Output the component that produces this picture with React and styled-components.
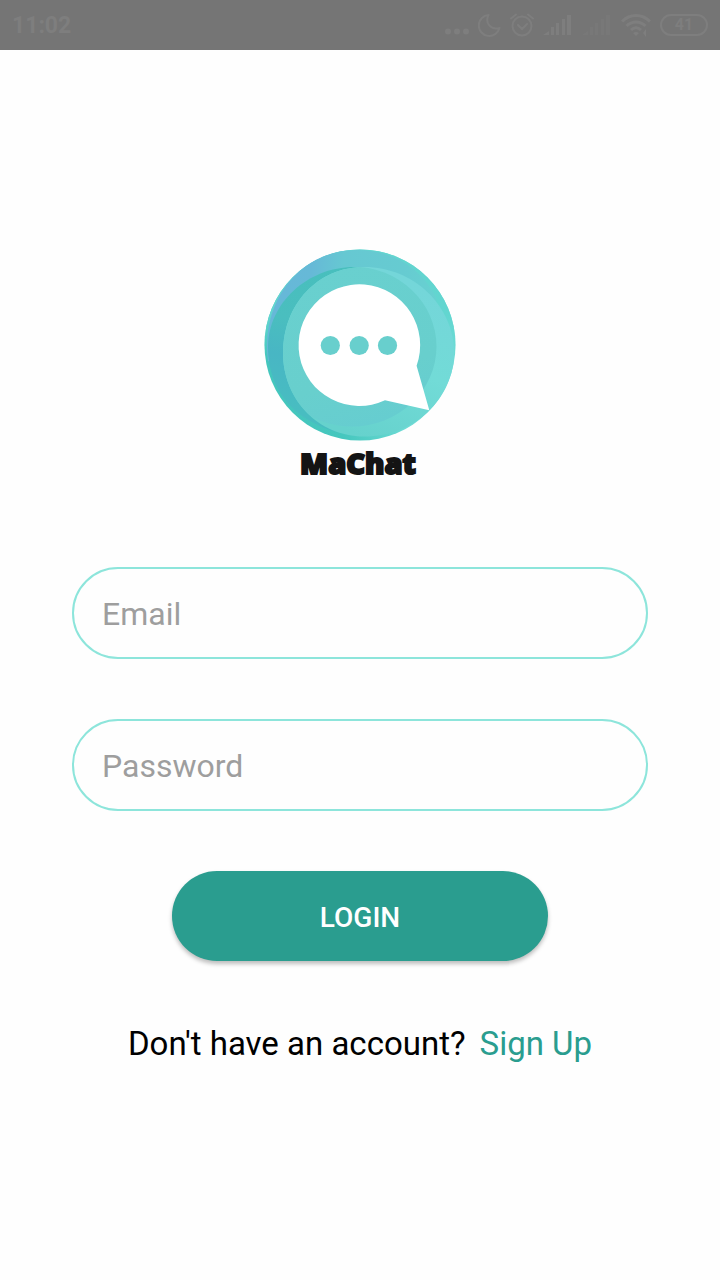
import React from "react";
import styled, { createGlobalStyle } from "styled-components";

const teal = "#2a9d8f";

const GlobalStyle = createGlobalStyle`
  *, *::before, *::after { box-sizing: border-box; }
  html, body { margin: 0; padding: 0; background: #fefefe; }
  body { font-family: Roboto, "Liberation Sans", sans-serif; }
`;

const Screen = styled.div`
  display: flex;
  flex-direction: column;
  min-height: 100vh;
`;

const StatusBar = styled.header`
  display: flex;
  align-items: center;
  justify-content: space-between;
  height: 50px;
  padding: 0 12px;
  background: #757575;
  color: #7e7e7e;
`;

const Clock = styled.time`
  padding-top: 2px;
  font-size: 23px;
  font-weight: 700;
  line-height: 28px;
`;

const StatusIcons = styled.div`
  display: flex;
  align-items: center;
  gap: 9px;
`;

const StatusIcon = styled.svg`
  display: block;
  width: ${(p) => p.$width}px;
  height: 28px;
  opacity: ${(p) => (p.$faint ? 0.4 : 1)};
`;

const Battery = styled.span`
  display: flex;
  align-items: center;
  justify-content: center;
  width: 48px;
  height: 22px;
  border: 2px solid currentColor;
  border-radius: 11px;
  font-size: 16px;
  font-weight: 700;
  line-height: 18px;
`;

const Main = styled.main`
  display: flex;
  flex: 1;
  flex-direction: column;
  align-items: center;
  padding: 199px 10% 40px;
`;

const Brand = styled.div`
  display: flex;
  flex-direction: column;
  align-items: center;
`;

const Logo = styled.svg`
  display: block;
  width: 192px;
  height: 192px;
`;

const BrandName = styled.h1`
  margin: 4px 4px 0 0;
  color: #141414;
  font-family: "Noto Sans", "Open Sans", sans-serif;
  font-size: 29px;
  font-weight: 900;
  line-height: 36px;
  -webkit-text-stroke: 2px #141414;
`;

const Form = styled.form`
  display: flex;
  flex-direction: column;
  align-items: center;
  gap: 60px;
  width: 100%;
  margin-top: 86px;
`;

const Field = styled.input`
  width: 100%;
  height: 92px;
  padding: 2px 28px 0;
  border: 2px solid #8de5db;
  border-radius: 46px;
  background: transparent;
  color: #000;
  font-family: inherit;
  font-size: 32px;
  outline: none;

  &::placeholder {
    color: #9e9e9e;
    opacity: 1;
  }

  &:focus { border-color: ${teal}; }
`;

const LoginButton = styled.button`
  width: 376px;
  max-width: 100%;
  height: 90px;
  padding: 2px 0 0;
  border: 0;
  border-radius: 45px;
  background: ${teal};
  box-shadow: 0 3px 4px rgba(0, 0, 0, 0.26);
  color: #fff;
  font-family: inherit;
  font-size: 28px;
  font-weight: 500;
  cursor: pointer;
`;

const SignUpPrompt = styled.p`
  display: flex;
  flex-wrap: wrap;
  justify-content: center;
  column-gap: 14px;
  margin: 63px 0 0;
  color: #000;
  font-size: 33px;
  line-height: 40px;
`;

const SignUpLink = styled.a`
  color: ${teal};
  text-decoration: none;
`;

function SignalIcon({ faint }) {
  return (
    <StatusIcon $width={30} $faint={faint} viewBox="0 0 30 28" fill="currentColor" aria-hidden="true">
      <path d="M0 24l6-4v4z" />
      <rect x="8" y="16" width="3" height="8" />
      <rect x="13" y="12" width="3" height="12" />
      <rect x="19" y="8" width="3" height="16" />
      <rect x="24" y="4" width="4" height="20" />
    </StatusIcon>
  );
}

function MaChatLogo() {
  return (
    <Logo viewBox="0 0 192 192" role="img" aria-label="MaChat logo">
      <defs>
        <linearGradient id="rim" gradientUnits="userSpaceOnUse" x1="20" y1="150" x2="150" y2="100">
          <stop offset="0" stopColor="#44c6bd" />
          <stop offset="0.3" stopColor="#46c7be" />
          <stop offset="0.75" stopColor="#6edbd5" />
          <stop offset="1" stopColor="#6fdcd6" />
        </linearGradient>
        <linearGradient id="rimTop" gradientUnits="userSpaceOnUse" x1="0" y1="0" x2="0" y2="110">
          <stop offset="0" stopColor="#62d4cf" />
          <stop offset="0.6" stopColor="#62d6d0" />
          <stop offset="1" stopColor="#62d6d0" stopOpacity="0" />
        </linearGradient>
        <linearGradient id="sky" gradientUnits="userSpaceOnUse" x1="20" y1="60" x2="176" y2="70">
          <stop offset="0" stopColor="#66b8d8" />
          <stop offset="0.16" stopColor="#66b9d7" />
          <stop offset="0.36" stopColor="#66c8d2" />
          <stop offset="0.75" stopColor="#66cbd1" />
          <stop offset="1" stopColor="#68d2d1" />
        </linearGradient>
        <linearGradient id="deep" gradientUnits="userSpaceOnUse" x1="60" y1="18" x2="30" y2="160">
          <stop offset="0" stopColor="#48bfbd" />
          <stop offset="0.4" stopColor="#4abebf" />
          <stop offset="0.65" stopColor="#48b6c4" />
          <stop offset="1" stopColor="#48bdc1" />
        </linearGradient>
        <linearGradient id="glow" gradientUnits="userSpaceOnUse" x1="160" y1="40" x2="100" y2="188">
          <stop offset="0" stopColor="#74d6d9" />
          <stop offset="0.5" stopColor="#72dbd7" />
          <stop offset="1" stopColor="#66d2cd" />
        </linearGradient>
        <linearGradient id="core" gradientUnits="userSpaceOnUse" x1="50" y1="20" x2="100" y2="178">
          <stop offset="0" stopColor="#69d0cf" />
          <stop offset="0.7" stopColor="#68cfcd" />
          <stop offset="1" stopColor="#66cdd0" />
        </linearGradient>
        <clipPath id="coreClip">
          <ellipse cx="88" cy="97.5" rx="84.5" ry="80" />
        </clipPath>
      </defs>
      <circle cx="96" cy="96" r="95.5" fill="url(#rim)" />
      <circle cx="96" cy="96" r="95.5" fill="url(#rimTop)" />
      <path
        d="M4 112 C-4 50 38 1 92 1 C126 1 155 16 172 48 L176 100 L96 150z"
        fill="url(#sky)"
      />
      <path
        d="M4 98 C4 54 44 18 90 18 L100 18 L96 187 C42 182 4 150 4 98z"
        fill="url(#deep)"
      />
      <path
        d="M19 104 C19 55 54 18 100 18 C150 18 190 57 190 104 C190 148 152 187.500 100 187.500 C54 187.500 19 150 19 104z"
        fill="url(#glow)"
      />
      <path
        d="M19 104 C19 55 54 18 100 18 C150 18 190 57 190 104 C190 148 152 187.500 100 187.500 C54 187.500 19 150 19 104z"
        fill="url(#core)"
        clipPath="url(#coreClip)"
      />
      <path
        d="M152.600 116.700 L165.300 161.200 L121 151.300 A60.800 60.800 0 1 1 152.600 116.700z"
        fill="#fff"
      />
      <g fill="#68cfcd">
        <circle cx="66.300" cy="96.500" r="9.600" />
        <circle cx="95.200" cy="96.500" r="9.600" />
        <circle cx="123.500" cy="96.500" r="9.600" />
      </g>
    </Logo>
  );
}

export default function App() {
  return (
    <Screen>
      <GlobalStyle />
      <StatusBar>
        <Clock>11:02</Clock>
        <StatusIcons>
          <StatusIcon $width={24} viewBox="0 0 24 28" fill="currentColor" aria-hidden="true">
            <circle cx="3" cy="20.500" r="3" />
            <circle cx="12" cy="20.500" r="3" />
            <circle cx="21" cy="20.500" r="3" />
          </StatusIcon>
          <StatusIcon $width={23} viewBox="0 0 23 28" fill="none" stroke="currentColor" strokeWidth="2" strokeLinejoin="round" aria-hidden="true">
            <path d="M10.500 4 A10.500 10.500 0 1 0 21.500 17 C13 19.500 6.500 12 10.500 4z" />
          </StatusIcon>
          <StatusIcon $width={24} viewBox="0 0 24 28" fill="none" stroke="currentColor" strokeWidth="2" strokeLinecap="round" aria-hidden="true">
            <circle cx="12" cy="15" r="9.500" />
            <path d="M8 14l4 4 5-5M1 7.500l5-4M23 7.500l-5-4" />
          </StatusIcon>
          <SignalIcon />
          <SignalIcon faint />
          <StatusIcon $width={30} viewBox="0 0 30 28" fill="none" stroke="currentColor" strokeWidth="3" aria-hidden="true">
            <path d="M1 10.500 C9 2.500 21 2.500 29 10.500M5.500 15 C11 9.500 19 9.500 24.500 15M10 19 C13 16 17 16 20 19" />
            <path d="M12 22l3 3 3-3c-2-1.500-4-1.500-6 0z" fill="currentColor" stroke="none" />
            <path d="M25 18v8l-3-4z" fill="currentColor" stroke="none" />
          </StatusIcon>
          <Battery>41</Battery>
        </StatusIcons>
      </StatusBar>
      <Main>
        <Brand>
          <MaChatLogo />
          <BrandName>MaChat</BrandName>
        </Brand>
        <Form onSubmit={(event) => event.preventDefault()}>
          <Field type="email" placeholder="Email" aria-label="Email" />
          <Field type="password" placeholder="Password" aria-label="Password" />
          <LoginButton type="submit">LOGIN</LoginButton>
        </Form>
        <SignUpPrompt>
          <span>Don't have an account?</span>
          <SignUpLink href="#signup">Sign Up</SignUpLink>
        </SignUpPrompt>
      </Main>
    </Screen>
  );
}
